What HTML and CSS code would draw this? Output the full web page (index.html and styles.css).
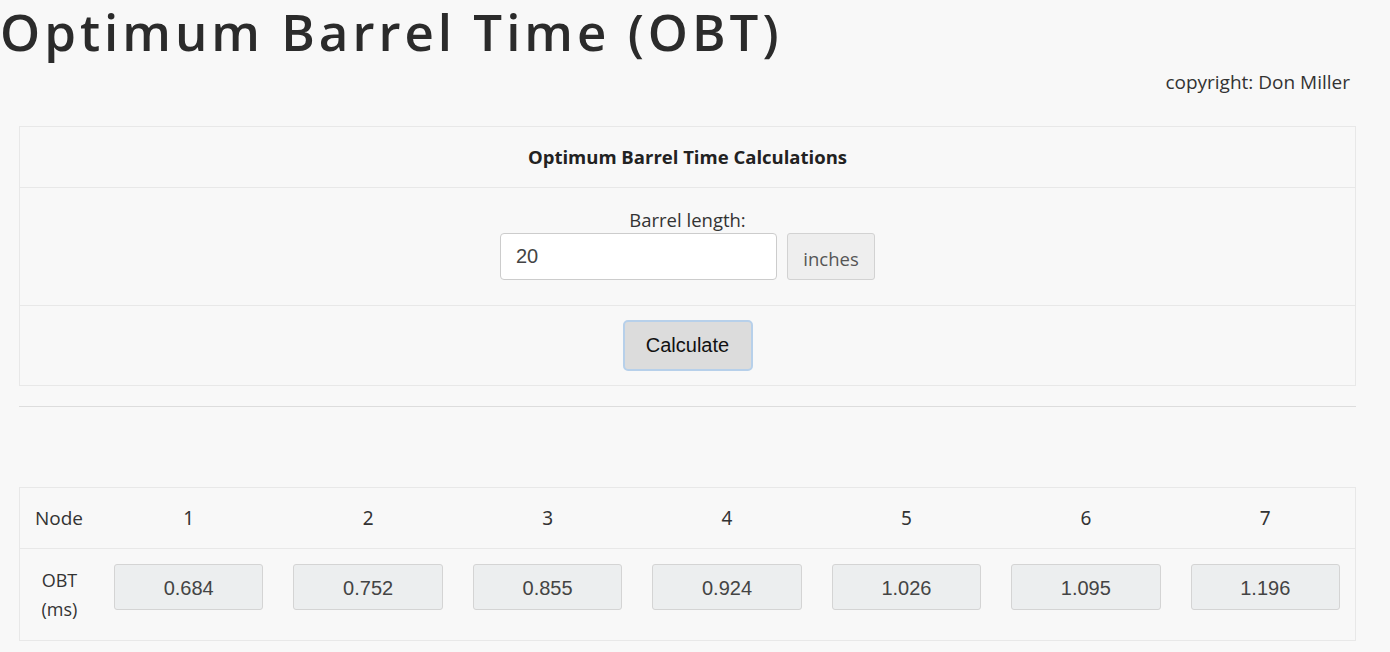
FILE: index.html
```html
<!DOCTYPE html>
<html lang="en">
<head>
<meta charset="UTF-8">
<title>Optimum Barrel Time (OBT)</title>
<link rel="stylesheet" href="styles.css">
</head>
<body>
<h1 class="title">Optimum Barrel Time (OBT)</h1>
<div class="copyright">copyright: Don Miller</div>

<div class="card">
  <div class="card-header">Optimum Barrel Time Calculations</div>
  <div class="card-body">
    <label for="barrel">Barrel length:</label>
    <div class="input-row">
      <input id="barrel" type="text" value="20">
      <span class="unit">inches</span>
    </div>
  </div>
  <div class="card-footer">
    <button id="calc">Calculate</button>
  </div>
</div>

<hr class="divider">

<div class="results">
  <div class="row head">
    <div class="label">Node</div>
    <div class="cell">1</div>
    <div class="cell">2</div>
    <div class="cell">3</div>
    <div class="cell">4</div>
    <div class="cell">5</div>
    <div class="cell">6</div>
    <div class="cell">7</div>
  </div>
  <div class="row values">
    <div class="label center">OBT<br>(ms)</div>
    <div class="cell"><div class="out">0.684</div></div>
    <div class="cell"><div class="out">0.752</div></div>
    <div class="cell"><div class="out">0.855</div></div>
    <div class="cell"><div class="out">0.924</div></div>
    <div class="cell"><div class="out">1.026</div></div>
    <div class="cell"><div class="out">1.095</div></div>
    <div class="cell"><div class="out">1.196</div></div>
  </div>
</div>
</body>
</html>
```

FILE: styles.css
```css
body {
  font-family: 'Open Sans', 'Noto Sans', sans-serif;
  margin: 0;
  background-color: #f8f8f8;
  color: #333;
}

.title {
  margin: 0;
  font-size: 51px;
  font-weight: 600;
  letter-spacing: 4px;
  line-height: 62px;
  color: #2b2b2b;
  white-space: nowrap;
}

.copyright {
  text-align: right;
  font-size: 19px;
  padding-right: 40px;
  margin-top: 5px;
  line-height: 30px;
}

.card {
  margin: 29px 34px 0 19px;
  border: 1px solid #e8e8e8;
}

.card-header {
  height: 60px;
  line-height: 60px;
  text-align: center;
  font-weight: bold;
  font-size: 18.5px;
  color: #222;
  border-bottom: 1px solid #e8e8e8;
}

.card-body {
  height: 118px;
  display: flex;
  flex-direction: column;
  align-items: center;
  padding-top: 18px;
  box-sizing: border-box;
  border-bottom: 1px solid #e8e8e8;
}

.card-body label {
  font-size: 18.5px;
  line-height: 27px;
}

.input-row {
  display: flex;
  gap: 10px;
}

.input-row input {
  width: 277px;
  height: 47px;
  box-sizing: border-box;
  border: 1px solid #ccc;
  border-radius: 4px;
  padding: 0 15px;
  font-family: 'Liberation Sans', Arial, sans-serif;
  font-size: 20px;
  color: #444;
  background: #fff;
}

.unit {
  width: 88px;
  height: 47px;
  box-sizing: border-box;
  border: 1px solid #d2d2d2;
  border-radius: 3px;
  background: #eee;
  display: flex;
  align-items: center;
  justify-content: center;
  font-size: 18.5px;
  color: #555;
  padding-top: 3px;
}

.card-footer {
  height: 79px;
  display: flex;
  align-items: center;
  justify-content: center;
}

#calc {
  width: 130px;
  height: 51px;
  background: #dcdcdc;
  border: 2px solid #b7d0ea;
  border-radius: 5px;
  font-family: 'Liberation Sans', Arial, sans-serif;
  font-size: 20px;
  color: #111;
  cursor: pointer;
}

.divider {
  margin: 20px 34px 0 19px;
  border: none;
  border-top: 1px solid #ddd;
}

.results {
  margin: 80px 34px 0 19px;
  border: 1px solid #e8e8e8;
}

.row {
  display: grid;
  grid-template-columns: 79px repeat(7, 1fr);
  align-items: center;
}

.row.head {
  height: 60px;
  border-bottom: 1px solid #e8e8e8;
  font-size: 19px;
}

.row.values {
  height: 91px;
  box-sizing: border-box;
  padding-top: 15px;
  align-items: start;
}

.label {
  padding-left: 15px;
  font-size: 19px;
}

.label.center {
  padding-left: 0;
  padding-top: 2px;
  text-align: center;
  font-size: 18px;
  line-height: 29px;
}

.cell {
  text-align: center;
  padding: 0 15px;
}

.head .cell {
  font-family: 'Noto Sans', sans-serif;
}

.out {
  height: 46px;
  line-height: 46px;
  box-sizing: border-box;
  border: 1px solid #d4d4d4;
  border-radius: 3px;
  background: #eceeef;
  font-family: 'Liberation Sans', Arial, sans-serif;
  font-size: 20px;
  color: #444;
}
```
